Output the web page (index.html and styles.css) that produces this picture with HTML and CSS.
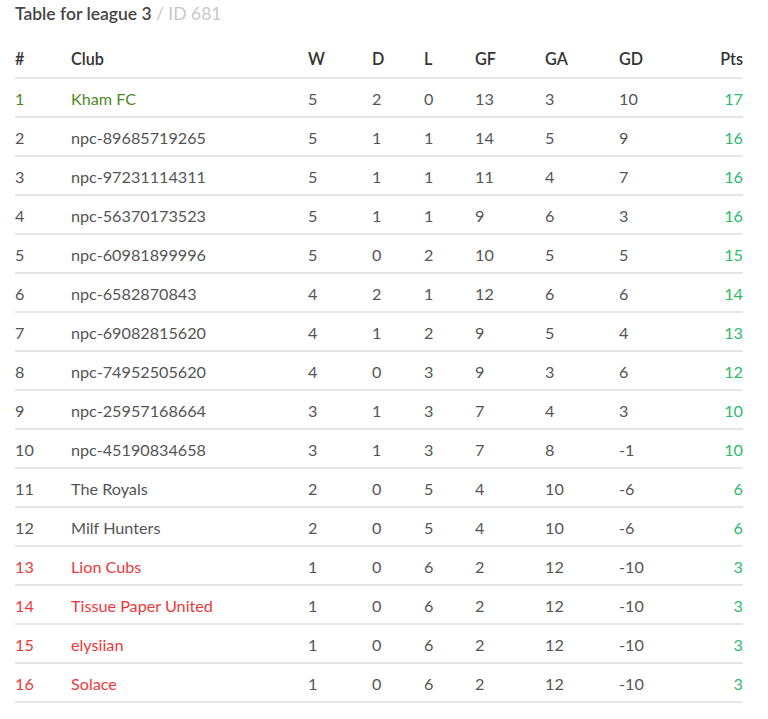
FILE: index.html
```html
<!DOCTYPE html>
<html>
<head>
<meta charset="utf-8">
<link rel="stylesheet" href="styles.css">
</head>
<body>
<div class="page">
  <h1 class="title">Table for league 3 <span class="sub">/ ID 681</span></h1>
  <table class="league">
    <colgroup>
      <col class="c-pos"><col class="c-club"><col class="c-w"><col class="c-d"><col class="c-l"><col class="c-gf"><col class="c-ga"><col class="c-gd"><col class="c-pts">
    </colgroup>
    <thead>
      <tr><th>#</th><th>Club</th><th>W</th><th>D</th><th>L</th><th>GF</th><th>GA</th><th>GD</th><th class="pts">Pts</th></tr>
    </thead>
    <tbody>
      <tr class="top"><td>1</td><td>Kham FC</td><td>5</td><td>2</td><td>0</td><td>13</td><td>3</td><td>10</td><td class="pts">17</td></tr>
      <tr><td>2</td><td>npc-89685719265</td><td>5</td><td>1</td><td>1</td><td>14</td><td>5</td><td>9</td><td class="pts">16</td></tr>
      <tr><td>3</td><td>npc-97231114311</td><td>5</td><td>1</td><td>1</td><td>11</td><td>4</td><td>7</td><td class="pts">16</td></tr>
      <tr><td>4</td><td>npc-56370173523</td><td>5</td><td>1</td><td>1</td><td>9</td><td>6</td><td>3</td><td class="pts">16</td></tr>
      <tr><td>5</td><td>npc-60981899996</td><td>5</td><td>0</td><td>2</td><td>10</td><td>5</td><td>5</td><td class="pts">15</td></tr>
      <tr><td>6</td><td>npc-6582870843</td><td>4</td><td>2</td><td>1</td><td>12</td><td>6</td><td>6</td><td class="pts">14</td></tr>
      <tr><td>7</td><td>npc-69082815620</td><td>4</td><td>1</td><td>2</td><td>9</td><td>5</td><td>4</td><td class="pts">13</td></tr>
      <tr><td>8</td><td>npc-74952505620</td><td>4</td><td>0</td><td>3</td><td>9</td><td>3</td><td>6</td><td class="pts">12</td></tr>
      <tr><td>9</td><td>npc-25957168664</td><td>3</td><td>1</td><td>3</td><td>7</td><td>4</td><td>3</td><td class="pts">10</td></tr>
      <tr><td>10</td><td>npc-45190834658</td><td>3</td><td>1</td><td>3</td><td>7</td><td>8</td><td>-1</td><td class="pts">10</td></tr>
      <tr><td>11</td><td>The Royals</td><td>2</td><td>0</td><td>5</td><td>4</td><td>10</td><td>-6</td><td class="pts">6</td></tr>
      <tr><td>12</td><td>Milf Hunters</td><td>2</td><td>0</td><td>5</td><td>4</td><td>10</td><td>-6</td><td class="pts">6</td></tr>
      <tr class="rel"><td>13</td><td>Lion Cubs</td><td>1</td><td>0</td><td>6</td><td>2</td><td>12</td><td>-10</td><td class="pts">3</td></tr>
      <tr class="rel"><td>14</td><td>Tissue Paper United</td><td>1</td><td>0</td><td>6</td><td>2</td><td>12</td><td>-10</td><td class="pts">3</td></tr>
      <tr class="rel"><td>15</td><td>elysiian</td><td>1</td><td>0</td><td>6</td><td>2</td><td>12</td><td>-10</td><td class="pts">3</td></tr>
      <tr class="rel"><td>16</td><td>Solace</td><td>1</td><td>0</td><td>6</td><td>2</td><td>12</td><td>-10</td><td class="pts">3</td></tr>
    </tbody>
  </table>
</div>
</body>
</html>
```
FILE: styles.css
```css
html, body {
  margin: 0;
  padding: 0;
  background: #fff;
}
body {
  font-family: Lato, "Open Sans", "Liberation Sans", sans-serif;
  color: #555;
}
.page {
  padding: 3px 25px 0 15px;
}
.title {
  margin: 0;
  font-size: 17.5px;
  font-weight: 600;
  color: #444;
  line-height: 22px;
  height: 37px;
}
.title .sub {
  font-weight: 400;
  color: #c8c8c8;
}
.league {
  width: 728px;
  border-collapse: collapse;
  table-layout: fixed;
  font-size: 16.2px;
}
.c-pos { width: 56px; }
.c-club { width: 237px; }
.c-w { width: 64px; }
.c-d { width: 52px; }
.c-l { width: 51px; }
.c-gf { width: 70px; }
.c-ga { width: 74px; }
.c-gd { width: 80px; }
.c-pts { width: 44px; }
.league th, .league td {
  text-align: left;
  padding: 0;
  height: 37px;
  border-bottom: 2px solid #e6e6e6;
  vertical-align: middle;
}
.league th {
  font-weight: 600;
  color: #333;
}
.league td {
  padding-top: 1px;
  height: 36px;
}
.league .pts {
  text-align: right;
}
.league td.pts {
  color: #2dbb6a;
}
.league tr.top td:nth-child(1),
.league tr.top td:nth-child(2) {
  color: #4a8c1c;
}
.league tr.rel td:nth-child(1),
.league tr.rel td:nth-child(2) {
  color: #f0383a;
}
```
